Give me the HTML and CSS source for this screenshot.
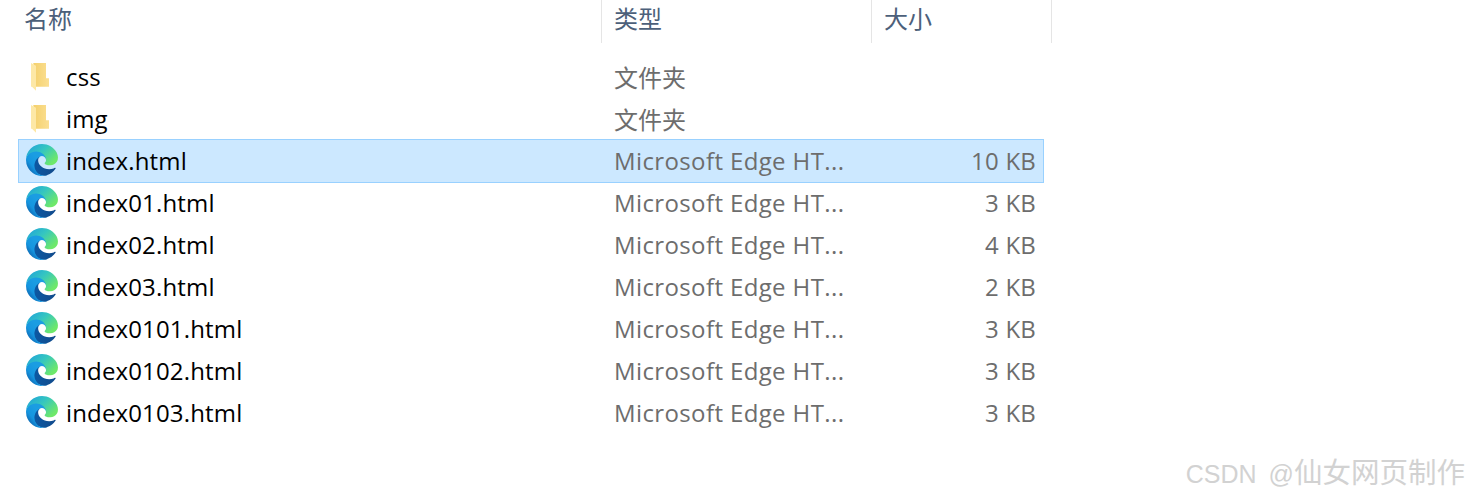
FILE: index.html
```html
<!DOCTYPE html>
<html lang="zh-CN">
<head>
  <meta charset="UTF-8">
  <title>文件列表</title>
  <link rel="stylesheet" href="styles.css">
</head>
<body>
  <svg class="defs" width="0" height="0" aria-hidden="true">
    <defs>
      <linearGradient id="edge-dark" x1="0" y1="0" x2="1" y2="0">
        <stop offset="0" stop-color="#0c59a4"/>
        <stop offset="1" stop-color="#114a8b"/>
      </linearGradient>
      <linearGradient id="edge-blue" x1="0.6" y1="0.4" x2="0.1" y2="0.9">
        <stop offset="0" stop-color="#1b9de2"/>
        <stop offset="0.5" stop-color="#1595df"/>
        <stop offset="1" stop-color="#0c59a4"/>
      </linearGradient>
      <linearGradient id="edge-green" x1="0.1" y1="0.1" x2="0.95" y2="0.7">
        <stop offset="0" stop-color="#22a7d8"/>
        <stop offset="0.45" stop-color="#35c6c0"/>
        <stop offset="1" stop-color="#6ee86a"/>
      </linearGradient>
      <linearGradient id="folder-back" x1="0" y1="0" x2="1" y2="0">
        <stop offset="0" stop-color="#f4d06c"/>
        <stop offset="1" stop-color="#fbdf92"/>
      </linearGradient>
      <symbol id="edge" viewBox="0 0 256 256">
        <path fill="url(#edge-dark)" d="M231.4 190.5c-3.4 1.8-6.9 3.4-10.5 4.7a101.5 101.5 0 0 1-35.8 6.4c-47.2 0-88.3-32.4-88.3-74a31.4 31.4 0 0 1 16.4-27.3c-42.7 1.8-53.7 46.3-53.7 72.3 0 73.8 68 81.2 82.6 81.2 7.9 0 19.8-2.3 27-4.6l1.3-.4a128.4 128.4 0 0 0 66.5-52.7 4 4 0 0 0-5.5-5.6Z"/>
        <path fill="url(#edge-blue)" d="M105.7 241.4a79.2 79.2 0 0 1-22.7-21.3 80.7 80.7 0 0 1 29.5-120c3.2-1.5 8.5-4.1 15.6-4a32.5 32.5 0 0 1 25.8 13 32 32 0 0 1 6.3 18.8c0-.2 24.5-79.6-80-79.6-43.9 0-80 41.6-80 78.2a130.2 130.2 0 0 0 12.1 56 128 128 0 0 0 156.4 67 75.5 75.5 0 0 1-63-8.1Z"/>
        <path fill="url(#edge-green)" d="M152.3 148.9c-.8 1-3.3 2.5-3.3 5.7 0 2.6 1.7 5.1 4.7 7.2 14.3 10 41.3 8.6 41.4 8.6a59.3 59.3 0 0 0 30.1-8.3 61 61 0 0 0 30.3-52.5c.3-22.3-8-37.1-11.3-43.7C222.9 27.1 177.5 0 128 0A128 128 0 0 0 0 126.2c.5-36.5 36.8-66 80-66 3.5 0 23.5.3 42 10a72.6 72.6 0 0 1 30.9 29.3c6.1 10.6 7.2 24.1 7.2 29.5s-2.7 13.3-7.8 19.9Z"/>
      </symbol>
      <symbol id="folder" viewBox="0 0 32 32">
        <path fill="url(#folder-back)" d="M7.3 3H20V18.3H23V26.7H10Z"/>
        <path fill="#fde8a6" d="M5 3L10 5.7V30.7L6 26.7H5Z"/>
      </symbol>
    </defs>
  </svg>

  <div class="header">
    <div class="col col-name">名称</div>
    <div class="col col-type">类型</div>
    <div class="col col-size">大小</div>
  </div>

  <ul class="files">
    <li class="row">
      <svg class="icon"><use href="#folder"/></svg>
      <span class="name">css</span>
      <span class="type">文件夹</span>
      <span class="size"></span>
    </li>
    <li class="row">
      <svg class="icon"><use href="#folder"/></svg>
      <span class="name">img</span>
      <span class="type">文件夹</span>
      <span class="size"></span>
    </li>
    <li class="row selected">
      <svg class="icon"><use href="#edge"/></svg>
      <span class="name">index.html</span>
      <span class="type doc">Microsoft Edge HT...</span>
      <span class="size">10 KB</span>
    </li>
    <li class="row">
      <svg class="icon"><use href="#edge"/></svg>
      <span class="name">index01.html</span>
      <span class="type doc">Microsoft Edge HT...</span>
      <span class="size">3 KB</span>
    </li>
    <li class="row">
      <svg class="icon"><use href="#edge"/></svg>
      <span class="name">index02.html</span>
      <span class="type doc">Microsoft Edge HT...</span>
      <span class="size">4 KB</span>
    </li>
    <li class="row">
      <svg class="icon"><use href="#edge"/></svg>
      <span class="name">index03.html</span>
      <span class="type doc">Microsoft Edge HT...</span>
      <span class="size">2 KB</span>
    </li>
    <li class="row">
      <svg class="icon"><use href="#edge"/></svg>
      <span class="name">index0101.html</span>
      <span class="type doc">Microsoft Edge HT...</span>
      <span class="size">3 KB</span>
    </li>
    <li class="row">
      <svg class="icon"><use href="#edge"/></svg>
      <span class="name">index0102.html</span>
      <span class="type doc">Microsoft Edge HT...</span>
      <span class="size">3 KB</span>
    </li>
    <li class="row">
      <svg class="icon"><use href="#edge"/></svg>
      <span class="name">index0103.html</span>
      <span class="type doc">Microsoft Edge HT...</span>
      <span class="size">3 KB</span>
    </li>
  </ul>

  <div class="watermark">CSDN @<span class="watermark-cn">仙女网页制作</span></div>
</body>
</html>
```

FILE: styles.css
```css
* {
  box-sizing: border-box;
}

html, body {
  height: 100%;
}

body {
  margin: 0;
  overflow: hidden;
  position: relative;
  background: #fff;
  font-family: "Open Sans", "Noto Sans CJK SC", sans-serif;
  font-size: 24px;
  color: #000;
}

.defs {
  position: absolute;
}

.header {
  display: flex;
  width: 1052px;
  height: 43px;
}

.col {
  height: 43px;
  line-height: 38px;
  color: #4c607a;
  border-right: 1px solid #e5e5e5;
}

.col-name {
  width: 602px;
  padding-left: 24px;
}

.col-type {
  width: 270px;
  padding-left: 12px;
}

.col-size {
  width: 180px;
  padding-left: 12px;
}

.files {
  list-style: none;
  margin: 13px 0 0 19px;
  padding: 0;
  width: 1024px;
}

.row {
  display: flex;
  align-items: center;
  height: 42px;
  padding-left: 7px;
  white-space: nowrap;
}

.row.selected {
  background: #cce8ff;
  outline: 1px solid #99d1ff;
}

.icon {
  width: 32px;
  height: 32px;
  margin-bottom: 2px;
  flex: none;
}

.name, .type, .size {
  padding-bottom: 2px;
}

.name {
  width: 548px;
  margin-left: 8px;
  flex: none;
  letter-spacing: 0.15px;
}

.type {
  width: 300px;
  flex: none;
  color: #6d6d6d;
}

.type.doc {
  letter-spacing: 0.38px;
}

.size {
  width: 122px;
  flex: none;
  text-align: right;
  color: #6d6d6d;
  letter-spacing: 0.2px;
}

.watermark {
  position: absolute;
  right: 4px;
  top: 453px;
  font-size: 25px;
  line-height: 36px;
  word-spacing: 5px;
  font-family: "Liberation Sans", "Noto Sans CJK SC", sans-serif;
  color: #d2d2d2;
}

.watermark-cn {
  font-size: 28.5px;
  font-family: "Noto Sans CJK SC", sans-serif;
}
```
